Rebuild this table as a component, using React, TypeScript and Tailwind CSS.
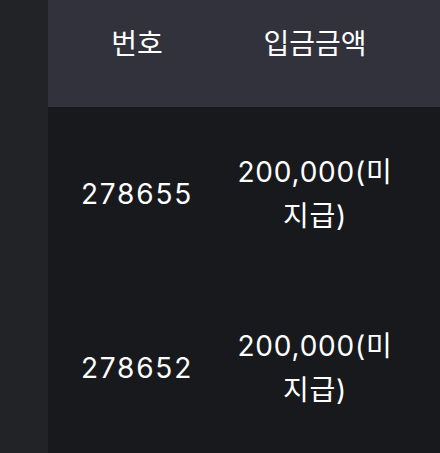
import React from "react";

const rows = [
  { id: "278655", amount: "200,000(미지급)" },
  { id: "278652", amount: "200,000(미지급)" },
];

export default function App() {
  return (
    <div
      className="flex h-[453px] w-[440px] overflow-hidden bg-[#18191c] text-white"
      style={{ fontFamily: "Inter, 'Noto Sans CJK KR', sans-serif" }}
    >
      <div className="w-[48px] shrink-0 bg-[#222327]" />
      <div className="flex flex-col">
        <div className="flex h-[107px] shrink-0 bg-[#32323d] pb-[20px]">
          <div className="flex w-[178px] shrink-0 items-center justify-center px-2 text-[28px] leading-[42px]">
            번호
          </div>
          <div className="flex w-[178px] shrink-0 items-center justify-center px-2 text-[28px] leading-[42px]">
            입금금액
          </div>
          <div className="w-[178px] shrink-0" />
        </div>
        {rows.map((r) => (
          <div key={r.id} className="flex h-[174px] shrink-0">
            <div className="flex w-[178px] shrink-0 items-center justify-center px-2 text-center text-[28px] leading-[44px] tracking-[1.8px]">
              {r.id}
            </div>
            <div className="flex w-[178px] shrink-0 items-center justify-center px-2 text-center text-[28px] leading-[44px] tracking-[0.8px]">
              {r.amount}
            </div>
            <div className="w-[178px] shrink-0" />
          </div>
        ))}
      </div>
    </div>
  );
}
